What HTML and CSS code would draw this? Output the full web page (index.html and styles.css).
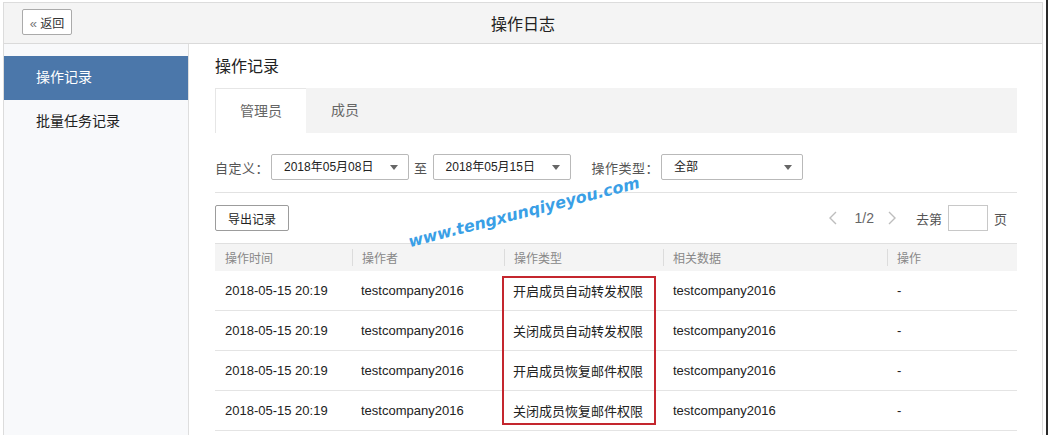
FILE: index.html
```html
<!DOCTYPE html>
<html lang="zh-CN">
<head>
    <meta name="viewport" content="width=device-width, initial-scale=1.0">
    <title>操作日志</title>
    <link rel="stylesheet" href="styles.css">
</head>
<body>
    <div class="page">
        <header class="top-bar">
            <button class="back-btn"><span class="dbl">&#171;</span> 返回</button>
            <h1>操作日志</h1>
        </header>

        <div class="layout">
            <aside class="sidebar">
                <ul>
                    <li class="active">操作记录</li>
                    <li>批量任务记录</li>
                </ul>
            </aside>

            <main class="content">
                <h2>操作记录</h2>

                <div class="tabs">
                    <div class="tab active">管理员</div>
                    <div class="tab">成员</div>
                </div>

                <div class="filters">
                    <span class="label">自定义：</span>
                    <div class="select date">2018年05月08日<i class="caret"></i></div>
                    <span class="label to">至</span>
                    <div class="select date">2018年05月15日<i class="caret"></i></div>
                    <span class="label type">操作类型：</span>
                    <div class="select kind">全部<i class="caret"></i></div>
                </div>

                <div class="toolbar">
                    <button class="export-btn">导出记录</button>
                    <div class="pager">
                        <svg class="arrow" width="8" height="14" viewBox="0 0 8 14"><path d="M7 1 L1 7 L7 13" fill="none" stroke="#bdbdbd" stroke-width="1.4"/></svg>
                        <span class="pages">1/2</span>
                        <svg class="arrow" width="8" height="14" viewBox="0 0 8 14"><path d="M1 1 L7 7 L1 13" fill="none" stroke="#bdbdbd" stroke-width="1.4"/></svg>
                        <span class="goto">去第</span>
                        <input class="page-input" type="text">
                        <span class="goto last">页</span>
                    </div>
                </div>

                <div class="table-wrap">
                    <table class="log-table">
                        <thead>
                            <tr>
                                <th class="c1">操作时间</th>
                                <th class="c2">操作者</th>
                                <th class="c3">操作类型</th>
                                <th class="c4">相关数据</th>
                                <th class="c5">操作</th>
                            </tr>
                        </thead>
                        <tbody>
                            <tr>
                                <td>2018-05-15 20:19</td>
                                <td>testcompany2016</td>
                                <td>开启成员自动转发权限</td>
                                <td>testcompany2016</td>
                                <td>-</td>
                            </tr>
                            <tr>
                                <td>2018-05-15 20:19</td>
                                <td>testcompany2016</td>
                                <td>关闭成员自动转发权限</td>
                                <td>testcompany2016</td>
                                <td>-</td>
                            </tr>
                            <tr>
                                <td>2018-05-15 20:19</td>
                                <td>testcompany2016</td>
                                <td>开启成员恢复邮件权限</td>
                                <td>testcompany2016</td>
                                <td>-</td>
                            </tr>
                            <tr>
                                <td>2018-05-15 20:19</td>
                                <td>testcompany2016</td>
                                <td>关闭成员恢复邮件权限</td>
                                <td>testcompany2016</td>
                                <td>-</td>
                            </tr>
                        </tbody>
                    </table>
                    <div class="highlight"></div>
                </div>

                <div class="watermark">www.tengxunqiyeyou.com</div>
            </main>
        </div>
    </div>
</body>
</html>
```

FILE: styles.css
```css
body {
    margin: 0;
    height: 435px;
    overflow: hidden;
    font-family: "Liberation Sans", "Noto Sans CJK SC", sans-serif;
    font-size: 13px;
    color: #222;
    background: #fff;
    border-right: 2px solid #2a2a2a;
}

.page {
    margin: 2px 3px 0 3px;
    border: 1px solid #dcdcdc;
    border-bottom: none;
    height: 433px;
    overflow: hidden;
}

/* top bar */
.top-bar {
    position: relative;
    height: 40px;
    background: #f4f4f4;
    border-bottom: 1px solid #dadada;
    display: flex;
    align-items: center;
    justify-content: center;
}

.top-bar h1 {
    margin: 0;
    font-size: 16px;
    font-weight: normal;
    color: #222;
}

.back-btn {
    position: absolute;
    left: 18px;
    top: 6px;
    height: 26px;
    width: 50px;
    padding: 0;
    font-family: inherit;
    font-size: 12px;
    color: #333;
    background: #fff;
    border: 1px solid #aaa;
    border-radius: 2px;
}

.back-btn .dbl {
    color: #777;
    font-size: 13px;
}

.layout {
    display: flex;
    height: 392px;
}

/* sidebar */
.sidebar {
    width: 184px;
    background: #f8f9fb;
    border-right: 1px solid #dedede;
    padding-top: 12px;
}

.sidebar ul {
    list-style: none;
    margin: 0;
    padding: 0;
}

.sidebar li {
    height: 44px;
    line-height: 43px;
    padding-left: 32px;
    font-size: 14px;
    color: #222;
}

.sidebar li.active {
    background: #4b77aa;
    color: #fff;
}

/* content */
.content {
    position: relative;
    flex: 1;
    padding: 12px 25px 0 26px;
}

.content h2 {
    margin: 0 0 10px;
    height: 22px;
    line-height: 22px;
    font-size: 16px;
    font-weight: normal;
    color: #222;
}

.tabs {
    display: flex;
    height: 45px;
    background: #f3f3f3;
}

.tab {
    width: 78px;
    line-height: 45px;
    text-align: center;
    font-size: 14px;
    color: #666;
}

.tab.active {
    width: 90px;
    background: #fff;
    border-left: 1px solid #e6e6e6;
    border-top: 1px solid #e6e6e6;
    line-height: 44px;
}

.filters {
    display: flex;
    align-items: center;
    height: 26px;
    margin-top: 21px;
    padding-bottom: 12px;
    border-bottom: 1px solid #e2e2e2;
}

.label {
    font-size: 13px;
    letter-spacing: 0.5px;
    color: #555;
    margin-right: 2px;
}

.label.to {
    margin: 0 5px 0 5px;
}

.label.type {
    margin-left: 21px;
}

.select {
    position: relative;
    box-sizing: border-box;
    height: 26px;
    line-height: 24px;
    padding-left: 12px;
    border: 1px solid #b9b9b9;
    border-radius: 2px;
    font-size: 12px;
    color: #222;
}

.select.date {
    width: 138px;
}

.select.kind {
    width: 142px;
}

.caret {
    position: absolute;
    right: 10px;
    top: 10px;
    border-left: 4px solid transparent;
    border-right: 4px solid transparent;
    border-top: 5px solid #666;
}

.toolbar {
    display: flex;
    align-items: center;
    justify-content: space-between;
    margin-top: 12px;
    height: 26px;
}

.export-btn {
    height: 26px;
    width: 74px;
    padding: 0;
    font-family: inherit;
    font-size: 12px;
    color: #222;
    background: #fff;
    border: 1px solid #9c9c9c;
    border-radius: 2px;
}

.pager {
    display: flex;
    align-items: center;
    color: #666;
    font-size: 13px;
}

.pages {
    margin: 0 14px 0 18px;
    font-size: 14px;
    color: #666;
}

.goto {
    margin-left: 20px;
    color: #555;
}

.page-input {
    box-sizing: border-box;
    width: 40px;
    height: 26px;
    margin: 0 6px;
    border: 1px solid #c8c8c8;
}

.goto.last {
    margin-left: 0;
    margin-right: 10px;
}

/* table */
.table-wrap {
    position: relative;
    margin-top: 12px;
}

.log-table {
    width: 100%;
    border-collapse: collapse;
    table-layout: fixed;
}

.log-table th {
    position: relative;
    box-sizing: border-box;
    height: 27px;
    padding: 0 0 0 10px;
    background: #f4f4f4;
    border-top: 1px solid #e0e0e0;
    text-align: left;
    font-weight: normal;
    font-size: 12px;
    color: #888;
}

.log-table th + th::before {
    content: "";
    position: absolute;
    left: 0;
    top: 5px;
    bottom: 5px;
    border-left: 1px solid #dcdcdc;
}

.log-table td {
    height: 39px;
    padding: 0 0 0 10px;
    border-bottom: 1px solid #e4e4e4;
    color: #222;
}

.log-table .c1 { width: 137px; }
.log-table .c2 { width: 152px; }
.log-table .c3 { width: 159px; }
.log-table .c4 { width: 224px; }

.log-table td:nth-child(2),
.log-table td:nth-child(3) {
    padding-left: 9px;
}

.highlight {
    position: absolute;
    left: 287px;
    top: 33px;
    width: 150px;
    height: 145px;
    border: 2px solid #c4262e;
}

.watermark {
    position: absolute;
    left: 222px;
    top: 188px;
    font-family: "DejaVu Sans", sans-serif;
    font-weight: bold;
    font-style: italic;
    font-size: 16px;
    color: #3a9fe6;
    transform: rotate(-14.5deg);
    transform-origin: left bottom;
    white-space: nowrap;
}
```
